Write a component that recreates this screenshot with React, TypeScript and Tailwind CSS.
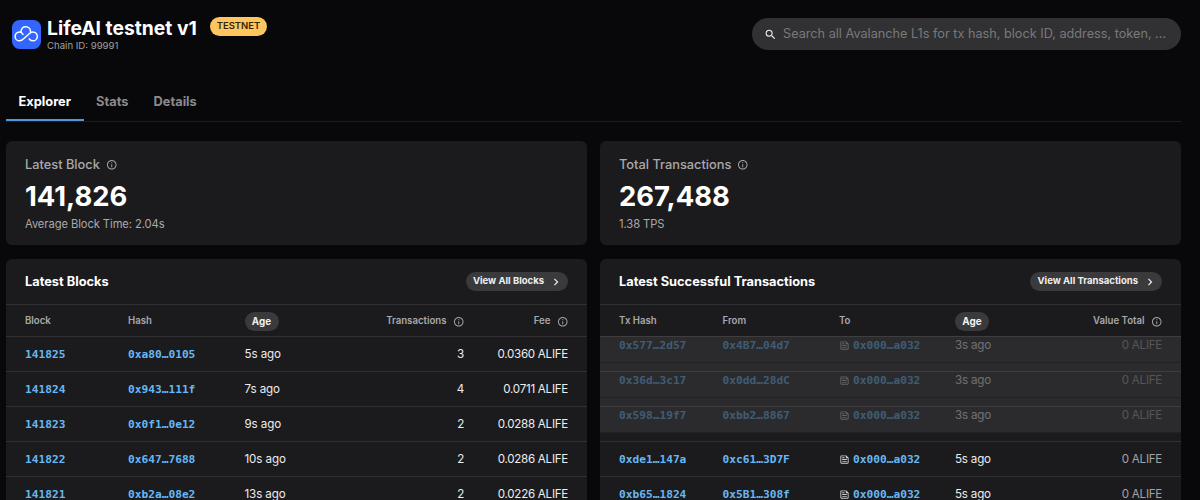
import { ReactNode } from "react";
import { clsx } from "clsx";
import {
  MdChevronRight,
  MdInfoOutline,
  MdOutlineFeed,
  MdSearch,
} from "react-icons/md";

const tabs = ["Explorer", "Stats", "Details"];

const blocks = [
  { block: "141825", hash: "0xa80…0105", age: "5s ago", txs: 3, fee: "0.0360" },
  { block: "141824", hash: "0x943…111f", age: "7s ago", txs: 4, fee: "0.0711" },
  { block: "141823", hash: "0x0f1…0e12", age: "9s ago", txs: 2, fee: "0.0288" },
  { block: "141822", hash: "0x647…7688", age: "10s ago", txs: 2, fee: "0.0286" },
  { block: "141821", hash: "0xb2a…08e2", age: "13s ago", txs: 2, fee: "0.0226" },
];

const transactions = [
  { hash: "0x577…2d57", from: "0x4B7…04d7", age: "3s ago", entering: true },
  { hash: "0x36d…3c17", from: "0x0dd…28dC", age: "3s ago", entering: true },
  { hash: "0x598…19f7", from: "0xbb2…8867", age: "3s ago", entering: true },
  { hash: "0xde1…147a", from: "0xc61…3D7F", age: "5s ago", entering: false },
  { hash: "0xb65…1824", from: "0x5B1…308f", age: "5s ago", entering: false },
];

const blockCols =
  "grid grid-cols-[103px_116.5px_1fr_104px] items-center px-[19px] pt-[2px]";
const txCols =
  "grid grid-cols-[103.5px_116.5px_116px_1fr] items-center px-[19px] pt-[2px]";

const headStyle =
  "h-8 border-t border-[#303032] text-[9.65px] font-semibold text-[#a9a9ab]";
const rowStyle = "h-[35px] border-t border-[#303032]";
const cellText = "text-[11.6px] tracking-[-0.27px] text-[#ededed]";

const Logo = () => (
  <svg viewBox="0 0 29 29" className="size-[29px] shrink-0">
    <rect width="29" height="29" rx="7.5" fill="#3366ff" />
    <path
      d="M11 14.4C10.200 12.900 9 12 7.500 12a4.400 4.400 0 0 0 0 8.800c1.700 0 2.900-.8 4.100-2l6.200-5.500M17.300 18.900c1 1.200 2.100 1.900 3.600 1.900a4.400 4.400 0 0 0 0-8.800c-1.200 0-2.200.4-3.200 1.400M9 11.800c.2-2.900 2-5 4.700-5s4.800 2 4.800 4.700"
      fill="none"
      stroke="#fff"
      strokeWidth="1.5"
      strokeLinecap="round"
      strokeLinejoin="round"
    />
  </svg>
);

const Info = () => <MdInfoOutline className="size-[11.5px] text-[#a3a3a4]" />;

const Hash = (props: { children: ReactNode }) => (
  <span className="font-['DejaVu_Sans_Mono',monospace] text-[11.2px] font-bold tracking-normal text-[#66b8f5]">
    {props.children}
  </span>
);

const AgePill = () => (
  <span className="-mt-px flex h-[19px] w-[34px] items-center justify-center rounded-full bg-[#3a3a3c] text-[9.9px] font-bold text-[#f0f0f0]">
    Age
  </span>
);

const StatCard = (props: { label: string; value: string; note: string }) => (
  <div className="h-[104px] rounded-md bg-[#1b1b1d] px-[19px] pt-[15px]">
    <div className="flex items-center gap-[6px] text-[12.8px] leading-[18px] font-medium text-[#a9a9ab]">
      {props.label}
      <Info />
    </div>
    <div className="mt-1 text-[27.4px] leading-[36px] font-bold text-white">
      {props.value}
    </div>
    <div className="mt-[2px] text-[11.2px] leading-[16px] tracking-[-0.08px] text-[#a9a9ab]">
      {props.note}
    </div>
  </div>
);

const Panel = (props: { title: string; action: string; children: ReactNode }) => (
  <div className="overflow-hidden rounded-t-md bg-[#1b1b1d]">
    <div className="flex h-[45px] items-center justify-between px-[19px]">
      <h2 className="text-[12.8px] font-bold text-white">{props.title}</h2>
      <button className="flex h-[19px] items-center gap-[5px] rounded-full bg-[#3a3a3c] pr-[5px] pl-[7px] text-[9.5px] font-bold text-[#f0f0f0]">
        {props.action}
        <MdChevronRight className="size-[14px]" />
      </button>
    </div>
    {props.children}
  </div>
);

export default function App() {
  return (
    <div className="h-[500px] w-[1200px] overflow-hidden bg-[#08080a] pr-[19px] pl-[6px] font-['Inter',sans-serif]">
      <header className="flex h-[82px] items-start justify-between pt-[17px]">
        <div className="flex pl-[6px]">
          <div className="pt-[3px]">
            <Logo />
          </div>
          <div className="ml-[6px]">
            <h1 className="w-[151px] text-[19.3px] leading-[23px] font-bold whitespace-nowrap text-white">
              LifeAI testnet v1
            </h1>
            <p className="text-[9.6px] leading-[12px] text-[#a0a0a2]">
              Chain ID: 99991
            </p>
          </div>
          <span className="ml-3 flex h-[19px] w-[57px] items-center justify-center rounded-full bg-[#ffc55f] text-[9.5px] font-semibold text-[#33250b]">
            TESTNET
          </span>
        </div>
        <div className="mt-px flex h-8 w-[429px] items-center rounded-full bg-[#313133] pl-3">
          <MdSearch className="size-[13px] text-[#f0f0f0]" />
          <span className="ml-[6px] text-[12.7px] text-[#79797b]">
            Search all Avalanche L1s for tx hash, block ID, address, token, ...
          </span>
        </div>
      </header>

      <nav className="flex h-[40px] border-b border-[#1d1d1f] text-[12.8px] font-bold">
        {tabs.map((tab, i) => (
          <div
            key={tab}
            className={clsx(
              "-mb-px h-[39px] px-[12.6px] pt-[10px]",
              i === 0
                ? "border-b-2 border-[#4f96dd] text-white"
                : "text-[#8b8b8d]"
            )}
          >
            {tab}
          </div>
        ))}
      </nav>

      <main className="mt-[19px] grid grid-cols-2 gap-x-[13px] gap-y-[14px]">
        <StatCard
          label="Latest Block"
          value="141,826"
          note="Average Block Time: 2.04s"
        />
        <StatCard label="Total Transactions" value="267,488" note="1.38 TPS" />

        <Panel title="Latest Blocks" action="View All Blocks">
          <div className={clsx(blockCols, headStyle)}>
            <span>Block</span>
            <span>Hash</span>
            <div className="flex items-center justify-between">
              <AgePill />
              <span className="flex items-center gap-[6px]">
                Transactions <Info />
              </span>
            </div>
            <span className="flex items-center justify-end gap-[6px]">
              Fee <Info />
            </span>
          </div>
          {blocks.map((b) => (
            <div key={b.block} className={clsx(blockCols, rowStyle, cellText)}>
              <Hash>{b.block}</Hash>
              <Hash>{b.hash}</Hash>
              <div className="flex justify-between">
                <span className="tracking-[-0.1px]">{b.age}</span>
                <span>{b.txs}</span>
              </div>
              <span className="text-right">{b.fee} ALIFE</span>
            </div>
          ))}
        </Panel>

        <Panel title="Latest Successful Transactions" action="View All Transactions">
          <div className={clsx(txCols, headStyle)}>
            <span>Tx Hash</span>
            <span>From</span>
            <span>To</span>
            <div className="flex items-center justify-between">
              <AgePill />
              <span className="flex items-center gap-[6px]">
                Value Total <Info />
              </span>
            </div>
          </div>
          <div className="overflow-hidden">
            {transactions.map((t) => (
              <div key={t.hash} className={rowStyle}>
                {/* new rows are still sliding in from above */}
                <div
                  className={clsx(
                    txCols,
                    cellText,
                    t.entering
                      ? "h-[35px] -translate-y-[9px] border-b border-black/20 bg-white/7 *:opacity-35"
                      : "h-[34px]"
                  )}
                >
                  <Hash>{t.hash}</Hash>
                  <Hash>{t.from}</Hash>
                  <span className="flex items-center gap-[3px]">
                    <MdOutlineFeed className="size-[11px] text-[#cfcfd1]" />
                    <Hash>0x000…a032</Hash>
                  </span>
                  <div className="flex justify-between">
                    <span className="tracking-[-0.2px]">{t.age}</span>
                    <span className="text-[#a3a3a5]">0 ALIFE</span>
                  </div>
                </div>
              </div>
            ))}
          </div>
        </Panel>
      </main>
    </div>
  );
}
